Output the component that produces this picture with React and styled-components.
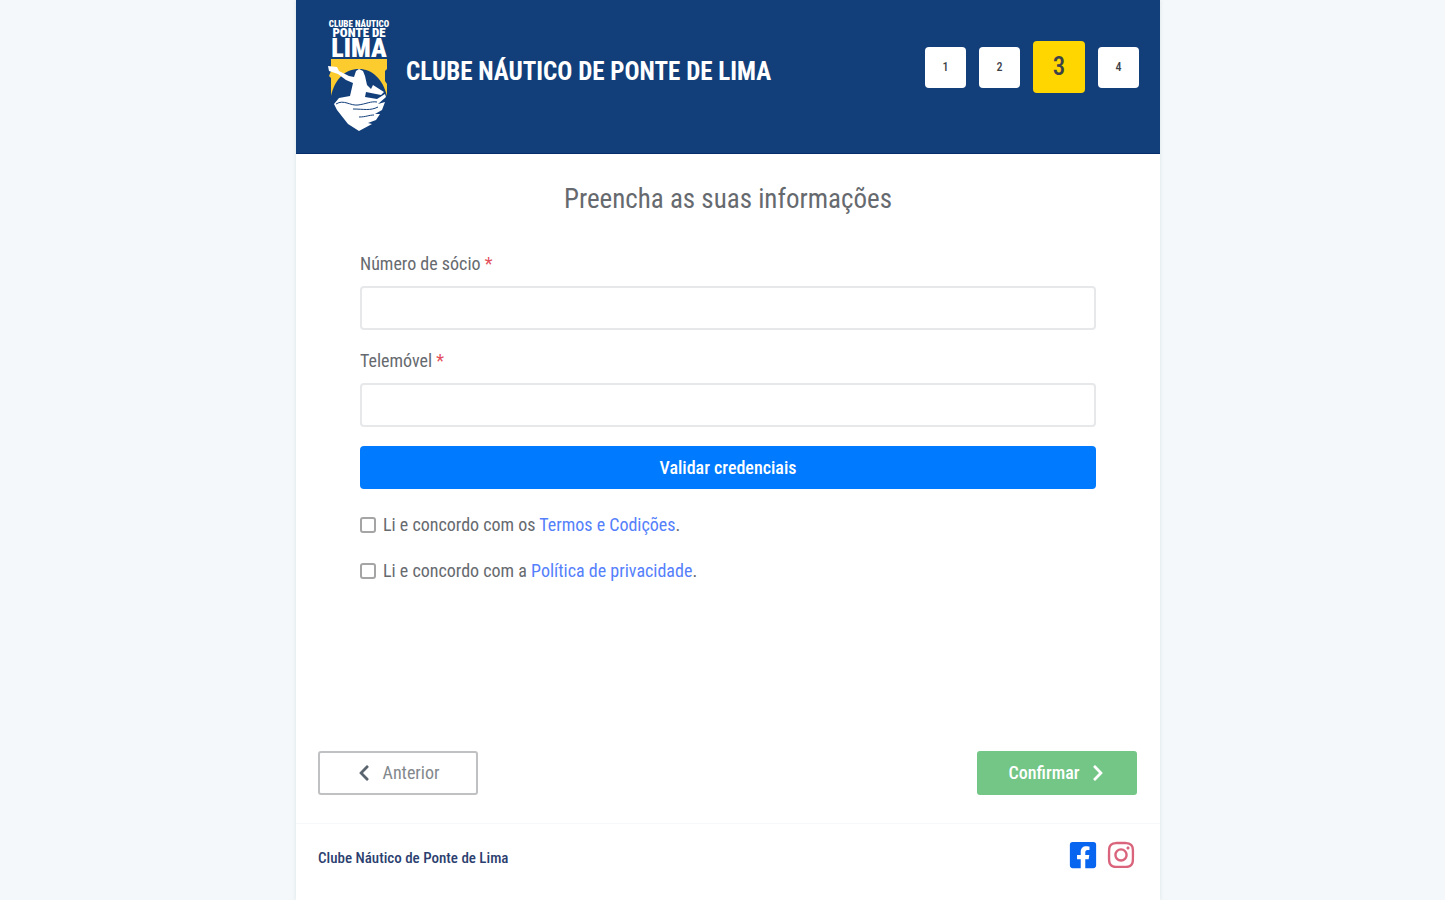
import React, { useState } from "react";
import styled, { createGlobalStyle } from "styled-components";
import { FaChevronLeft, FaChevronRight, FaFacebookSquare, FaInstagram } from "react-icons/fa";

const GlobalStyle = createGlobalStyle`
  * {
    box-sizing: border-box;
  }

  body {
    margin: 0;
    background-color: #f4f8fa;
    color: #666a6f;
    font-family: "Roboto Condensed", "Liberation Sans Narrow", Roboto, sans-serif;
    font-size: 18px;
    line-height: 24px;
  }

  button,
  input {
    font: inherit;
  }
`;

const Page = styled.div`
  display: flex;
  justify-content: center;
  min-height: 100vh;
  padding-left: 11px;
`;

const Card = styled.div`
  display: flex;
  flex-direction: column;
  width: 100%;
  max-width: 864px;
  background-color: #fff;
  box-shadow: 0 0 4px rgba(40, 70, 100, 0.12);
`;

const Header = styled.header`
  display: flex;
  align-items: flex-start;
  padding: 19px 21px 22px 32px;
  background-color: #123f7a;
  border-bottom: 1px solid #062d6c;
`;

const Logo = styled.svg`
  width: 62px;
  height: 112px;
  margin-right: 16px;
  flex: none;
`;

const ClubName = styled.h1`
  margin: 38px auto 0 0;
  color: #fff;
  font-size: 25px;
  font-weight: 700;
  line-height: 30px;
`;

const Steps = styled.nav`
  display: flex;
  align-items: center;
  gap: 13px;
  margin-top: 22px;
`;

const Step = styled.button`
  width: ${(props) => (props.$current ? "52px" : "41px")};
  height: ${(props) => (props.$current ? "52px" : "41px")};
  padding: 0;
  color: #3d4148;
  font-size: ${(props) => (props.$current ? "25px" : "12px")};
  font-weight: 500;
  background-color: ${(props) => (props.$current ? "#ffd600" : "#fff")};
  border: 0;
  border-radius: 4px;
`;

const Form = styled.form`
  display: flex;
  flex-direction: column;
  flex: 1;
`;

const Heading = styled.h2`
  margin: 28px 0 36px;
  font-size: 27px;
  font-weight: 400;
  line-height: 34px;
  text-align: center;
`;

const Fields = styled.div`
  display: flex;
  flex-direction: column;
  padding: 0 64px;
`;

const Label = styled.label`
  margin-bottom: 10px;
`;

const Required = styled.span`
  color: #e3505d;
`;

const TextInput = styled.input`
  width: 100%;
  height: 44px;
  margin-bottom: 19px;
  padding: 0 14px;
  background-color: #fff;
  border: 2px solid #e6e8ea;
  border-radius: 4px;
`;

const ValidateButton = styled.button`
  height: 43px;
  margin-bottom: 24px;
  color: #fff;
  font-weight: 500;
  background-color: #007bff;
  border: 0;
  border-radius: 4px;
`;

const Agreement = styled.div`
  display: flex;
  align-items: center;
  gap: 7px;
  margin-bottom: 22px;

  input {
    appearance: none;
    width: 16px;
    height: 16px;
    margin: 0;
    background-color: #fff;
    border: 2px solid #a5a5a5;
    border-radius: 3px;
  }

  input:checked {
    background-color: #007bff;
  }

  a {
    color: #5580fb;
    text-decoration: none;
  }
`;

const Actions = styled.div`
  display: flex;
  justify-content: space-between;
  margin-top: auto;
  padding: 0 23px 28px 22px;
`;

const ActionButton = styled.button`
  display: flex;
  align-items: center;
  justify-content: center;
  gap: 12px;
  width: 160px;
  height: 44px;
  color: ${(props) => (props.$primary ? "#fff" : "#83888d")};
  font-weight: ${(props) => (props.$primary ? 500 : 400)};
  background-color: ${(props) => (props.$primary ? "#73c686" : "#fff")};
  border: ${(props) => (props.$primary ? "0" : "2px solid #bfc1c3")};
  border-radius: 3px;

  svg {
    width: 14px;
    height: 18px;
    color: ${(props) => (props.$primary ? "#fff" : "#5b6570")};
  }
`;

const Footer = styled.footer`
  display: flex;
  justify-content: space-between;
  height: 77px;
  padding: 16px 24px 0 22px;
  border-top: 1px solid #f7f8f9;
`;

const FooterName = styled.span`
  margin-top: 6px;
  color: #2c3f70;
  font-size: 15px;
  font-weight: 500;
`;

const Social = styled.div`
  display: flex;
  gap: 8px;

  a {
    height: 30px;
    color: #0865f0;
  }

  a + a {
    color: #d9647c;
  }
`;

const LogoText = styled.text`
  fill: #fff;
  font-family: "Roboto Condensed", Roboto, sans-serif;
  font-weight: 900;
  text-anchor: middle;
`;

const ClubLogo = () => (
  <Logo viewBox="0 0 62 112" role="img" aria-label="Clube Náutico Ponte de Lima">
    <LogoText x="31" y="8" fontSize="9">CLUBE NÁUTICO</LogoText>
    <LogoText x="31" y="18" fontSize="13">PONTE DE</LogoText>
    <LogoText x="31" y="38" fontSize="26">LIMA</LogoText>
    <path fill="#fccb2d" d="M3 40H59V50L57 52V62L59 65V77C55 60 44 50 31 50C17 50 7 60 3 77V59L1 57L3 52Z" />
    <path fill="#fff" d="M0 47L9 48L11 52L21 57L26 58L28 52L31 50L35 52L37 57L39 66L43 70L45 66L56 73L53 76L43 74L38 73L37 78L49 80L57 75L58 78L50 85L57 83L54 91L47 95L52 95L48 101L40 104L44 105L31 112L20 105L9 91L6 85L11 79L22 77L25 64L18 61L10 55L1 52Z" />
    <path fill="none" stroke="#123f7a" strokeWidth="1" d="M8 85C16 80 22 87 30 86S43 82 49 83M25 90C36 90 42 92 50 88M31 98C38 98 41 96 46 96" />
  </Logo>
);

const Field = ({ id, label, type }) => (
  <>
    <Label htmlFor={id}>
      {label} <Required>*</Required>
    </Label>
    <TextInput id={id} type={type} required />
  </>
);

const Agree = ({ id, text, link }) => {
  const [checked, setChecked] = useState(false);

  return (
    <Agreement>
      <input id={id} type="checkbox" checked={checked} onChange={() => setChecked(!checked)} />
      <label htmlFor={id}>
        {text} <a href={`#${id}`}>{link}</a>.
      </label>
    </Agreement>
  );
};

const App = () => {
  const currentStep = 3;

  return (
    <Page>
      <GlobalStyle />
      <Card>
        <Header>
          <ClubLogo />
          <ClubName>CLUBE NÁUTICO DE PONTE DE LIMA</ClubName>
          <Steps>
            {[1, 2, 3, 4].map((step) => (
              <Step key={step} type="button" $current={step === currentStep}>
                {step}
              </Step>
            ))}
          </Steps>
        </Header>

        <Form onSubmit={(e) => e.preventDefault()}>
          <Heading>Preencha as suas informações</Heading>
          <Fields>
            <Field id="socio" label="Número de sócio" type="text" />
            <Field id="telemovel" label="Telemóvel" type="tel" />
            <ValidateButton type="button">Validar credenciais</ValidateButton>
            <Agree id="termos" text="Li e concordo com os" link="Termos e Codições" />
            <Agree id="privacidade" text="Li e concordo com a" link="Política de privacidade" />
          </Fields>
          <Actions>
            <ActionButton type="button">
              <FaChevronLeft />
              Anterior
            </ActionButton>
            <ActionButton type="submit" $primary>
              Confirmar
              <FaChevronRight />
            </ActionButton>
          </Actions>
        </Form>

        <Footer>
          <FooterName>Clube Náutico de Ponte de Lima</FooterName>
          <Social>
            <a href="#facebook" aria-label="Facebook">
              <FaFacebookSquare size={30} />
            </a>
            <a href="#instagram" aria-label="Instagram">
              <FaInstagram size={30} />
            </a>
          </Social>
        </Footer>
      </Card>
    </Page>
  );
};

export default App;
